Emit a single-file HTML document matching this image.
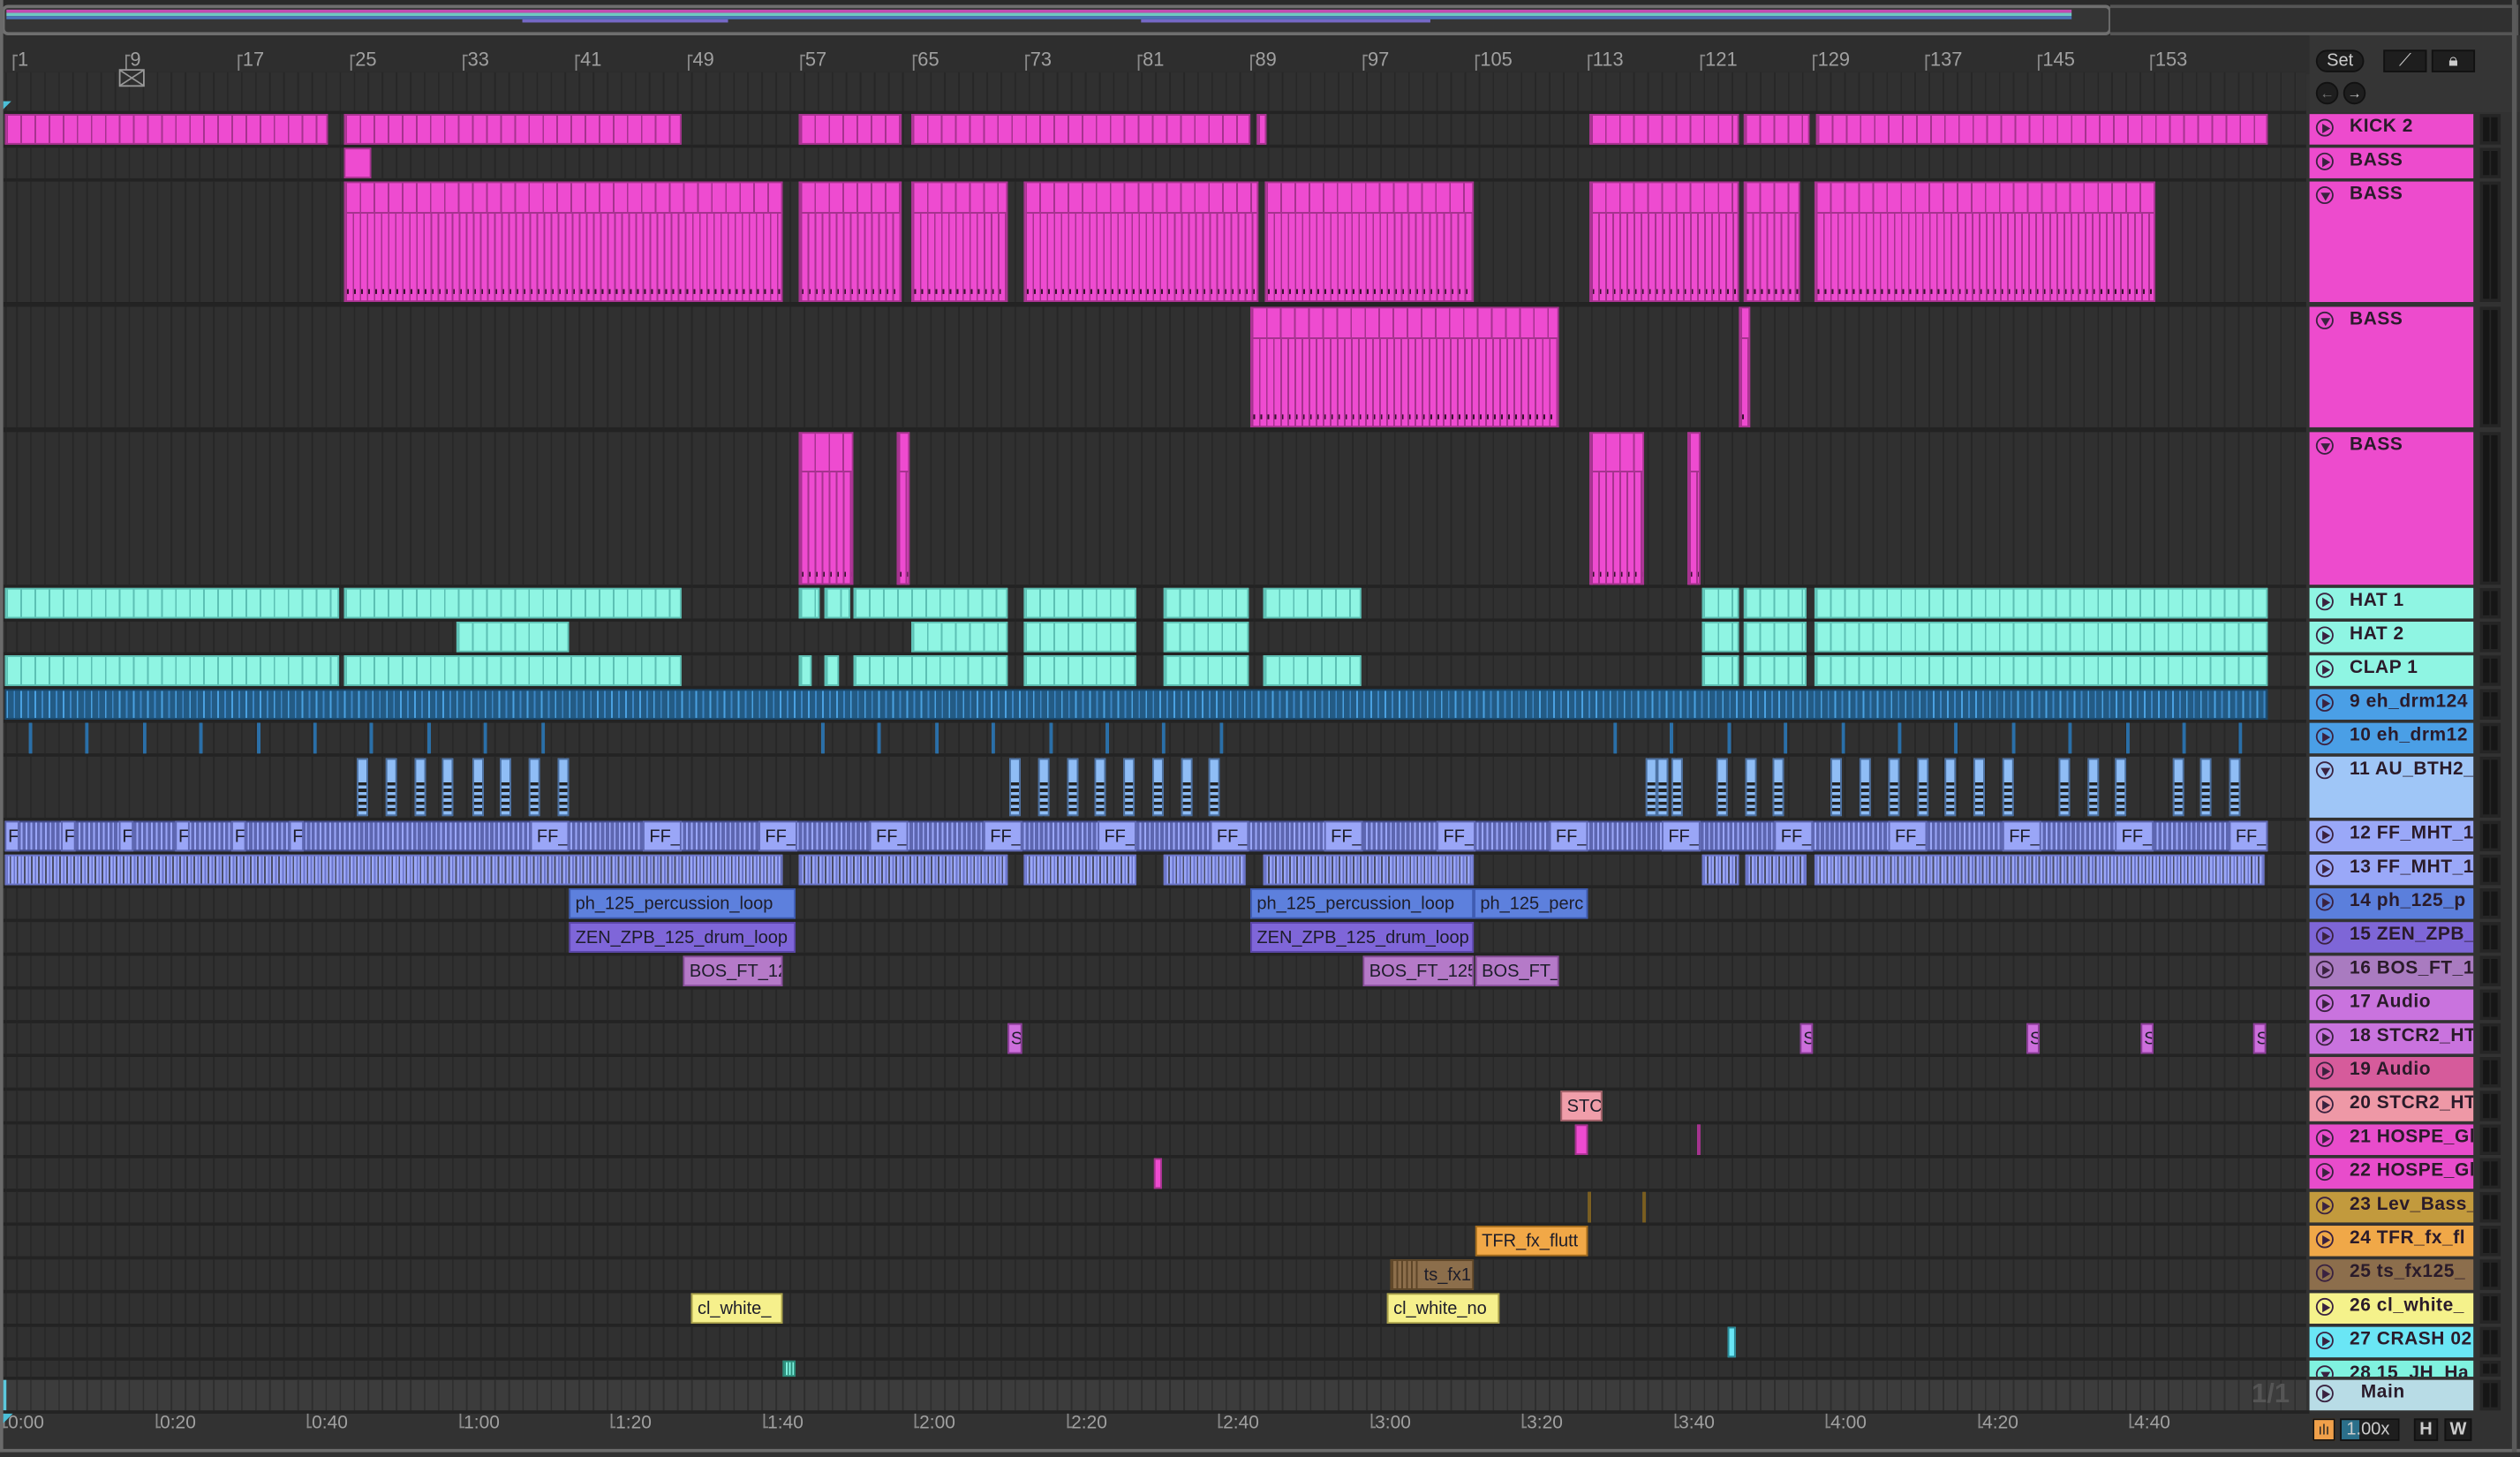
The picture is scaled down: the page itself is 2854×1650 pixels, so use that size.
<!DOCTYPE html>
<html><head><meta charset="utf-8">
<style>
html,body{margin:0;padding:0;background:#2b2b2b;overflow:hidden;width:2854px;height:1650px}
#s{position:absolute;left:0;top:0;width:1568px;height:907px;transform:scale(1.82015,1.81918);transform-origin:0 0;font-family:"Liberation Sans",sans-serif;background:#323232}
.a{position:absolute}
.grid{background-color:#303030;background-image:repeating-linear-gradient(90deg,#272727 0 1px,transparent 1px 8.75px);background-position:8px 0}
.hdr{position:absolute;left:1437px;width:102px;font-weight:bold;font-size:11.5px;color:#2a1b2a;letter-spacing:.3px;white-space:nowrap;overflow:hidden}
.hdr i{position:absolute;left:4px;top:3px;width:11px;height:11px;border:1.3px solid #3a2240;border-radius:50%;box-sizing:border-box}
.hdr i:after{content:"";position:absolute;left:3.3px;top:1.8px;border-left:5px solid #3a2240;border-top:3px solid transparent;border-bottom:3px solid transparent}
.hdr i.d:after{left:1.6px;top:3px;border-top:5px solid #3a2240;border-left:3px solid transparent;border-right:3px solid transparent;border-bottom:0}
.hdr span{position:absolute;left:25px;top:2px}
.mt{position:absolute;left:1543px;width:13px;background:#252525}
.mt:before,.mt:after{content:"";position:absolute;top:2px;bottom:2px;width:4px;background:#161616;left:2px}
.mt:after{left:7px}
.c{position:absolute;overflow:hidden;white-space:nowrap;font-size:11px;color:#1d1d2a;box-sizing:border-box;line-height:18px;padding-left:3px}
.rl{position:absolute;top:30px;font-size:12px;color:#a0a0a0}
.rl:before{content:"";position:absolute;left:-3px;top:4px;width:2px;height:9px;border-left:1px solid #888;border-top:1px solid #888}
.tl{position:absolute;top:880px;font-size:11.5px;color:#a0a0a0}
.tl:before{content:"";position:absolute;left:-3px;top:0;width:2px;height:8px;border-left:1px solid #888;border-bottom:1px solid #888}
.btn{position:absolute;background:#1e1e1e;border:1px solid #111;color:#ccc;font-size:11px;text-align:center;box-sizing:border-box}
</style></head><body><div id="s">
<div class="a" style="left:0;top:0;width:1568px;height:22px;background:#2a2a2a"></div>
<div class="a" style="left:1px;top:3px;width:1309px;height:15px;border:2px solid #6f6f6f;border-radius:4px;background:#353535"></div>
<div class="a" style="left:1313px;top:3px;width:252px;height:15px;border:2px solid #555;border-left:0;background:#303030"></div>
<div class="a" style="left:4px;top:6px;width:1285px;height:2px;background:#c34cb0"></div>
<div class="a" style="left:4px;top:8px;width:1285px;height:2px;background:#6fc9c0"></div>
<div class="a" style="left:4px;top:10px;width:1285px;height:2px;background:#4b74b8"></div>
<div class="a" style="left:325px;top:12px;width:128px;height:2px;background:#7569c7"></div>
<div class="a" style="left:710px;top:12px;width:180px;height:2px;background:#7569c7"></div>
<div class="a" style="left:0;top:22px;width:1437px;height:24px;background:#2e2e2e"></div>
<div id="rul"></div>
<div class="a" style="left:1437px;top:22px;width:131px;height:48px;background:#353535"></div>
<div class="btn" style="left:1441px;top:31px;width:30px;height:14px;border-radius:7px;line-height:12px">Set</div>
<div class="btn" style="left:1483px;top:31px;width:27px;height:14px;line-height:12px">⟋</div>
<div class="btn" style="left:1513px;top:31px;width:27px;height:14px;line-height:12px">🔒︎</div>
<div class="btn" style="left:1441px;top:51px;width:14px;height:14px;border-radius:7px;line-height:12px;font-size:9px;color:#777">←</div>
<div class="btn" style="left:1458px;top:51px;width:14px;height:14px;border-radius:7px;line-height:12px;font-size:9px">→</div>
<div class="a" style="left:2px;top:45px;width:1433px;height:814px;background:#232323"></div>
<div class="a grid" style="left:2px;top:45px;width:1433px;height:24px"></div>
<div class="a" style="left:74px;top:43px;width:16px;height:11px;border:1px solid #999;box-sizing:border-box;background:linear-gradient(33deg,transparent 46%,#999 48%,#999 52%,transparent 54%),linear-gradient(-33deg,transparent 46%,#999 48%,#999 52%,transparent 54%)"></div>
<div class="a" style="left:2px;top:63px;border-left:5px solid #4bbfd8;border-bottom:5px solid transparent"></div>
<div id="arr"></div>
<div class="c" style="left:354px;top:553px;width:141px;height:19px;background:#5d80dd;border:1px solid #3e5bb0">ph_125_percussion_loop</div>
<div class="c" style="left:778px;top:553px;width:139px;height:19px;background:#5d80dd;border:1px solid #3e5bb0">ph_125_percussion_loop</div>
<div class="c" style="left:917px;top:553px;width:71px;height:19px;background:#5d80dd;border:1px solid #3e5bb0">ph_125_perc</div>
<div class="c" style="left:354px;top:574px;width:141px;height:19px;background:#7f66d9;border:1px solid #5a45a8">ZEN_ZPB_125_drum_loop</div>
<div class="c" style="left:778px;top:574px;width:139px;height:19px;background:#7f66d9;border:1px solid #5a45a8">ZEN_ZPB_125_drum_loop</div>
<div class="c" style="left:425px;top:595px;width:62px;height:19px;background:#b57ac8;border:1px solid #8a4f9c">BOS_FT_12</div>
<div class="c" style="left:848px;top:595px;width:69px;height:19px;background:#b57ac8;border:1px solid #8a4f9c">BOS_FT_125</div>
<div class="c" style="left:918px;top:595px;width:52px;height:19px;background:#b57ac8;border:1px solid #8a4f9c">BOS_FT_</div>
<div class="c" style="left:971px;top:679px;width:26px;height:19px;background:#f09eaa;border:1px solid #a06068">STCI</div>
<div class="c" style="left:918px;top:763px;width:70px;height:19px;background:#f1a847;border:1px solid #a26b1c">TFR_fx_flutt</div>
<div class="c" style="left:865px;top:784px;width:52px;height:19px;background:#8c6e4b;border:1px solid #5e4628;padding-left:20px;background-image:repeating-linear-gradient(90deg,#5e4628 0 1px,transparent 1px 3px);background-size:18px 100%;background-repeat:no-repeat">ts_fx1</div>
<div class="c" style="left:430px;top:805px;width:57px;height:19px;background:#f6f08c;border:1px solid #a8a04a">cl_white_</div>
<div class="c" style="left:863px;top:805px;width:70px;height:19px;background:#f6f08c;border:1px solid #a8a04a">cl_white_no</div>
<div class="c" style="left:627px;top:637px;width:9px;height:19px;background:#cd6fdc;border:1px solid #8b3d98;padding-left:1px">S</div>
<div class="c" style="left:1120px;top:637px;width:8px;height:19px;background:#cd6fdc;border:1px solid #8b3d98;padding-left:1px">S</div>
<div class="c" style="left:1261px;top:637px;width:8px;height:19px;background:#cd6fdc;border:1px solid #8b3d98;padding-left:1px">S</div>
<div class="c" style="left:1332px;top:637px;width:8px;height:19px;background:#cd6fdc;border:1px solid #8b3d98;padding-left:1px">S</div>
<div class="c" style="left:1402px;top:637px;width:8px;height:19px;background:#cd6fdc;border:1px solid #8b3d98;padding-left:1px">S</div>
<div id="ff"></div>
<div class="a" style="left:2px;top:859px;width:1433px;height:19px;background-color:#3c3c3c;background-image:repeating-linear-gradient(90deg,#2e2e2e 0 1px,transparent 1px 8.75px);background-position:8px 0"></div>
<div class="a" style="left:1401px;top:858px;font-size:17px;font-weight:bold;color:#555">1/1</div>
<div class="a" style="left:2px;top:859px;width:2px;height:19px;background:#5cc8dc"></div>
<div class="a" style="left:0;top:878px;width:1437px;height:2px;background:#232323"></div>
<div id="tim"></div>
<div class="a" style="left:2px;top:880px;border-left:6px solid #4bbfd8;border-bottom:6px solid transparent"></div>
<div class="a" style="left:0;top:902px;width:1568px;height:2px;background:#6a6a6a"></div>
<div class="a" style="left:0;top:0;width:2px;height:904px;background:#6a6a6a"></div>
<div class="a" style="left:1563px;top:0;width:3px;height:904px;background:#5a5a5a"></div>
<div class="a" style="left:1439px;top:883px;width:14px;height:14px;background:#f0a04a;border:1px solid #111;box-sizing:border-box;font-size:9px;text-align:center;line-height:12px;color:#222">ılı</div>
<div class="btn" style="left:1456px;top:883px;width:37px;height:14px;line-height:12px;text-align:left;padding-left:3px;background:linear-gradient(90deg,#2b6f8a 0 11px,#1e1e1e 11px)">1.00x</div>
<div class="btn" style="left:1502px;top:883px;width:15px;height:14px;line-height:12px;font-weight:bold">H</div>
<div class="btn" style="left:1521px;top:883px;width:17px;height:14px;line-height:12px;font-weight:bold">W</div>
<div class="hdr" style="top:71px;height:19px;background:#ed4bcd"><i></i><span>KICK 2</span></div>
<div class="hdr" style="top:92px;height:19px;background:#ed4bcd"><i></i><span>BASS</span></div>
<div class="hdr" style="top:113px;height:75px;background:#ed4bcd"><i class="d"></i><span>BASS</span></div>
<div class="hdr" style="top:191px;height:75px;background:#ed4bcd"><i class="d"></i><span>BASS</span></div>
<div class="hdr" style="top:269px;height:95px;background:#ed4bcd"><i class="d"></i><span>BASS</span></div>
<div class="hdr" style="top:366px;height:19px;background:#8ff5e3"><i></i><span>HAT 1</span></div>
<div class="hdr" style="top:387px;height:19px;background:#8ff5e3"><i></i><span>HAT 2</span></div>
<div class="hdr" style="top:408px;height:19px;background:#8ff5e3"><i></i><span>CLAP 1</span></div>
<div class="hdr" style="top:429px;height:19px;background:#4a9fe6"><i></i><span>9 eh_drm124</span></div>
<div class="hdr" style="top:450px;height:19px;background:#4a9fe6"><i></i><span>10 eh_drm12</span></div>
<div class="hdr" style="top:471px;height:38px;background:#9fc6f7"><i class="d"></i><span>11 AU_BTH2_</span></div>
<div class="hdr" style="top:511px;height:19px;background:#9aa8f8"><i></i><span>12 FF_MHT_1</span></div>
<div class="hdr" style="top:532px;height:19px;background:#9aa8f8"><i></i><span>13 FF_MHT_1</span></div>
<div class="hdr" style="top:553px;height:19px;background:#5b7fdc"><i></i><span>14 ph_125_p</span></div>
<div class="hdr" style="top:574px;height:19px;background:#7e66d7"><i></i><span>15 ZEN_ZPB_</span></div>
<div class="hdr" style="top:595px;height:19px;background:#a97bc0"><i></i><span>16 BOS_FT_1</span></div>
<div class="hdr" style="top:616px;height:19px;background:#c973de"><i></i><span>17 Audio</span></div>
<div class="hdr" style="top:637px;height:19px;background:#c973de"><i></i><span>18 STCR2_HT</span></div>
<div class="hdr" style="top:658px;height:19px;background:#d65b9b"><i></i><span>19 Audio</span></div>
<div class="hdr" style="top:679px;height:19px;background:#ee98a6"><i></i><span>20 STCR2_HT</span></div>
<div class="hdr" style="top:700px;height:19px;background:#e84ccb"><i></i><span>21 HOSPE_Gli</span></div>
<div class="hdr" style="top:721px;height:19px;background:#e84ccb"><i></i><span>22 HOSPE_Gli</span></div>
<div class="hdr" style="top:742px;height:19px;background:#c29a3d"><i></i><span>23 Lev_Bass_</span></div>
<div class="hdr" style="top:763px;height:19px;background:#f0a848"><i></i><span>24 TFR_fx_fl</span></div>
<div class="hdr" style="top:784px;height:19px;background:#8c6e4c"><i></i><span>25 ts_fx125_</span></div>
<div class="hdr" style="top:805px;height:19px;background:#f5f28b"><i></i><span>26 cl_white_</span></div>
<div class="hdr" style="top:826px;height:19px;background:#6ae6f5"><i></i><span>27 CRASH 02</span></div>
<div class="hdr" style="top:847px;height:10px;background:#80f2df"><i class="d"></i><span>28 15_JH_Ha</span></div>
<div class="hdr" style="top:859px;height:19px;background:#b8dce6"><i></i><span style="left:32px">Main</span></div>
<div id="mt"></div>
</div>
<script>
var rows=[[71,19],[92,19],[113,75],[191,75],[269,95],[366,19],[387,19],[408,19],[429,19],[450,19],[471,38],[511,19],[532,19],[553,19],[574,19],[595,19],[616,19],[637,19],[658,19],[679,19],[700,19],[721,19],[742,19],[763,19],[784,19],[805,19],[826,19],[847,10],[859,19]];
var A=document.getElementById('arr'),h='',m='';
rows.slice(0,28).forEach(function(r){h+='<div class="a grid" style="left:2px;top:'+r[0]+'px;width:1433px;height:'+r[1]+'px"></div>';});
rows.forEach(function(r){m+='<div class="mt" style="top:'+r[0]+'px;height:'+r[1]+'px"></div>';});
document.getElementById('mt').innerHTML=m;
function cl(y,hh,x1,x2,bg,ln,step,extra){h+='<div class="a" style="left:'+x1+'px;top:'+y+'px;width:'+(x2-x1)+'px;height:'+hh+'px;background-color:'+bg+';'+(step?'background-image:repeating-linear-gradient(90deg,'+ln+' 0 1px,transparent 1px '+step+'px);':'')+'border:1px solid '+ln+';box-sizing:border-box;'+(extra||'')+'"></div>';}
var P='#ee4bd0',PL='#a6338f';
[[3,204],[214,424],[497,561],[567,778],[782,788],[989,1082],[1085,1126],[1130,1411]].forEach(function(s){cl(71,19,s[0],s[1],P,PL,8.75);});
cl(92,19,214,231,P,PL);
function tall(y,hh,s){var t=Math.round(hh*0.24);
cl(y,hh,s[0],s[1],P,PL,0,'background-image:linear-gradient(#0000 0 '+t+'px,'+PL+' '+t+'px '+(t+1)+'px,#0000 '+(t+1)+'px),repeating-linear-gradient(90deg,'+PL+' 0 1px,transparent 1px 8.75px),linear-gradient(#0000,#0000),repeating-linear-gradient(90deg,'+PL+' 0 1px,transparent 1px 4.4px),repeating-linear-gradient(90deg,transparent 0 1px,#3a1030 1px 2px,transparent 2px 4.4px);background-size:100% 100%,100% '+t+'px,0 0,100% 100%,100% 3px;background-repeat:no-repeat,no-repeat,no-repeat,no-repeat,no-repeat;background-position:0 0,0 0,0 0,0 '+t+'px,0 '+(hh-9)+'px');}
[[214,487],[497,561],[567,627],[637,783],[787,917],[989,1082],[1085,1120],[1129,1341]].forEach(function(s){tall(113,75,s);});
[[778,970],[1082,1089]].forEach(function(s){tall(191,75,s);});
[[497,531],[558,566],[989,1023],[1050,1058]].forEach(function(s){tall(269,95,s);});
var C='#8ff5e3',CL='#5cc0b4';
[[3,211],[214,424],[497,510],[513,529],[531,627],[637,707],[724,777],[786,847],[1059,1082],[1085,1124],[1129,1411]].forEach(function(s){cl(366,19,s[0],s[1],C,CL,8.75);});
[[284,354],[567,627],[637,707],[724,777],[1059,1082],[1085,1124],[1129,1411]].forEach(function(s){cl(387,19,s[0],s[1],C,CL,8.75);});
[[3,211],[214,424],[497,505],[513,522],[531,627],[637,707],[724,777],[786,847],[1059,1082],[1085,1124],[1129,1411]].forEach(function(s){cl(408,19,s[0],s[1],C,CL,8.75);});
cl(429,19,3,1411,'#235b85','#1a4668',0,'background-image:repeating-linear-gradient(90deg,#4aa0e0 0 1px,transparent 1px 4.4px,#3b86c4 4.4px 5.4px,transparent 5.4px 8.75px)');
for(var x=18;x<340;x+=35.4)cl(450,19,x,x+2,'#3f9ee8','#2a6fa8');
for(var x=511;x<760;x+=35.4)cl(450,19,x,x+2,'#3f9ee8','#2a6fa8');
for(var x=1004;x<1395;x+=35.4)cl(450,19,x,x+2,'#3f9ee8','#2a6fa8');
[222,240,258,275,294,311,329,347,628,646,664,681,699,717,735,752,1024,1031,1040,1068,1086,1103,1139,1157,1175,1193,1210,1228,1246,1281,1299,1316,1352,1369,1387].forEach(function(x){cl(472,36,x,x+7,'#8fbdf5','#4a6fa0',0,'background-image:repeating-linear-gradient(#222 0 2px,transparent 2px 4px);background-size:100% 18px;background-position:0 14px;background-repeat:no-repeat');});
cl(511,19,3,1411,'#5d66b0','#444c8c',0,'background-image:repeating-linear-gradient(90deg,#9aa6f7 0 1px,transparent 1px 3px)');
var F='';
[330,400,472,541,612,683,753,824,894,964,1034,1104,1175,1246,1316,1387].forEach(function(x){F+='<div class="c" style="left:'+x+'px;top:511px;width:24px;height:19px;background:#9aa6f7;border:1px solid #5d66b0">FF_M</div>';});
[3,38,74,109,144,180].forEach(function(x){F+='<div class="c" style="left:'+x+'px;top:511px;width:9px;height:19px;background:#9aa6f7;border:1px solid #5d66b0;padding-left:1px">F</div>';});
document.getElementById('ff').innerHTML=F;
[[3,487],[497,627],[637,707],[724,775],[786,917],[1059,1082],[1086,1124],[1129,1409]].forEach(function(s){cl(532,19,s[0],s[1],'#9aa6f7','#6a74c8',4.4,'background-image:repeating-linear-gradient(90deg,#6a74c8 0 1px,transparent 1px 2px,#222a 2px 3px,transparent 3px 4.4px)');});
cl(700,19,980,988,P,PL);cl(700,19,1056,1058,P,PL);
cl(721,19,718,723,P,PL);
cl(742,19,988,990,'#c29a3d','#7a5e20');cl(742,19,1022,1023,'#7a5e20','#7a5e20');
cl(826,19,1075,1080,'#6ae6f5','#2a8a98');
cl(847,10,487,495,'#80f2df','#2a8a78',2);
A.innerHTML=h;
var R='';for(var b=1;b<=153;b+=8){var x=8+(b-1)*8.75;R+='<div class="rl" style="left:'+(x+3)+'px">'+b+'</div>';}
document.getElementById('rul').innerHTML=R;
var T='',lab=['0:00','0:20','0:40','1:00','1:20','1:40','2:00','2:20','2:40','3:00','3:20','3:40','4:00','4:20','4:40'];
lab.forEach(function(t,i){T+='<div class="tl" style="left:'+(5+i*94.5)+'px">'+t+'</div>';});
document.getElementById('tim').innerHTML=T;
</script>
</body></html>
